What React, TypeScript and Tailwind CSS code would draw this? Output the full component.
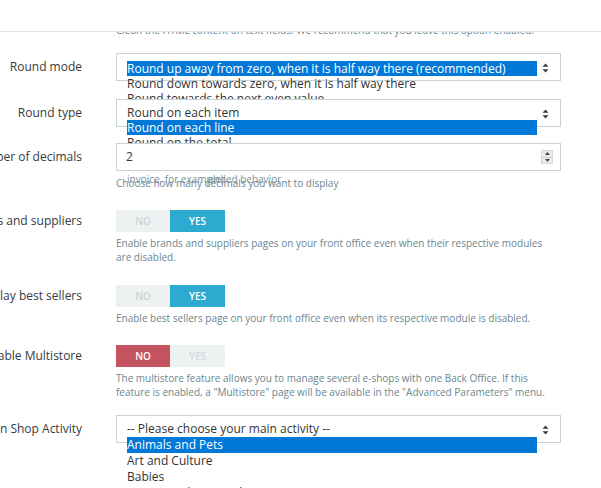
import type { ReactNode } from 'react'

const font = "font-['Open_Sans',sans-serif]"

function Label({ children, h = 'h-[28px]' }: { children: ReactNode; h?: string }) {
  return (
    <div className={`w-[82px] ${h} shrink-0 flex items-center justify-end overflow-hidden whitespace-nowrap text-[12px] text-[#363a41]`}>
      <span className="shrink-0">{children}</span>
    </div>
  )
}

function Arrows() {
  return (
    <svg width="7" height="10" viewBox="0 0 7 10" className="absolute right-[11px] top-[9px]">
      <path d="M3.5 0.5 L6.5 3.8 L0.5 3.8 Z" fill="#363a41" />
      <path d="M3.5 9.5 L6.5 6.2 L0.5 6.2 Z" fill="#363a41" />
    </svg>
  )
}

interface SelectProps {
  value?: string
  options: string[]
  active: number
  top: string
  row: string
}

function OpenSelect({ value, options, active, top, row }: SelectProps) {
  return (
    <div className="relative h-[28px] w-[445px] border border-[#c5d3d7] bg-white flex items-center pl-[10px] text-[12px] text-[#363a41]">
      {value}
      <Arrows />
      <div className={`absolute left-[10px] ${top} w-[410px] text-[12px] ${row} text-[#333]`}>
        {options.map((o, i) => (
          <div key={o} className={i === active ? 'bg-[#0078d7] text-white' : ''}>
            {o}
          </div>
        ))}
      </div>
    </div>
  )
}

function Switch({ on }: { on: boolean }) {
  return (
    <div className="flex h-[22px] w-[109px] text-[10px] font-semibold">
      <div className={`w-[54px] flex items-center justify-center ${on ? 'bg-[#eef1f2] text-[#cdd4d7]' : 'bg-[#c4545f] text-white'}`}>NO</div>
      <div className={`w-[55px] flex items-center justify-center ${on ? 'bg-[#2eaad0] text-white' : 'bg-[#eef1f2] text-[#d3d9db]'}`}>YES</div>
    </div>
  )
}

function Help({ children, className = '' }: { children: ReactNode; className?: string }) {
  return <div className={`text-[10px] leading-[14px] text-[#6c868e] ${className}`}>{children}</div>
}

export default function App() {
  return (
    <div className={`w-[601px] h-[488px] overflow-hidden bg-white relative ${font}`}>
      <div className="relative z-20 h-[32px] bg-white border-b border-[#dde3e5]" />

      <div className="flex gap-[34px] -mt-[9px]">
        <div className="w-[82px] shrink-0" />
        <Help className="whitespace-nowrap">Clean the HTML content on text fields. We recommend that you leave this option enabled.</Help>
      </div>

      {/* Round mode */}
      <div className="flex gap-[34px] mt-[16px]">
        <Label>Round mode</Label>
        <OpenSelect
          options={[
            'Round up away from zero, when it is half way there (recommended)',
            'Round down towards zero, when it is half way there',
            'Round towards the next even value',
          ]}
          active={0}
          top="top-[7px]"
          row="leading-[15px]"
        />
      </div>

      {/* Round type */}
      <div className="flex gap-[34px] mt-[18px]">
        <Label>Round type</Label>
        <OpenSelect
          options={['Round on each item', 'Round on each line', 'Round on the total']}
          active={1}
          top="top-[5px]"
          row="leading-[15px]"
        />
      </div>

      {/* Number of decimals */}
      <div className="flex gap-[34px] mt-[16px]">
        <Label>Number of decimals</Label>
        <div>
          <div className="relative z-10 h-[28px] w-[445px] border border-[#c5d3d7] bg-white flex items-center pl-[9px] text-[12px] text-[#363a41]">
            2
            <div className="absolute right-[7px] top-[6px] w-[12px] h-[14px] flex flex-col border border-[#d4d8da] bg-[#e9ebec]">
              <div className="flex-1 flex items-center justify-center border-b border-[#c9cdcf]">
                <svg width="5" height="3" viewBox="0 0 5 3"><path d="M2.5 0 L5 3 L0 3 Z" fill="#444" /></svg>
              </div>
              <div className="flex-1 flex items-center justify-center">
                <svg width="5" height="3" viewBox="0 0 5 3"><path d="M2.5 3 L5 0 L0 0 Z" fill="#444" /></svg>
              </div>
            </div>
          </div>
          <div className="relative mt-[5px]">
            <Help>Choose how many decimals you want to display</Help>
            <span className="absolute left-[11px] -top-[4px] text-[10px] leading-[14px] text-[#7d9096] whitespace-nowrap">invoice, for example)</span>
            <span className="absolute left-[92px] -top-[4px] text-[10px] leading-[14px] text-[#7d9096] whitespace-nowrap">ended behavior</span>
          </div>
        </div>
      </div>

      {/* Brands and suppliers */}
      <div className="flex gap-[34px] mt-[20px]">
        <Label h="h-[22px]">Display brands and suppliers</Label>
        <div>
          <Switch on />
          <Help className="mt-[4px] w-[440px]">
            Enable brands and suppliers pages on your front office even when their respective modules are disabled.
          </Help>
        </div>
      </div>

      {/* Best sellers */}
      <div className="flex gap-[34px] mt-[21px]">
        <Label h="h-[22px]">Display best sellers</Label>
        <div>
          <Switch on />
          <Help className="mt-[4px] whitespace-nowrap">
            Enable best sellers page on your front office even when its respective module is disabled.
          </Help>
        </div>
      </div>

      {/* Multistore */}
      <div className="flex gap-[34px] mt-[20px]">
        <Label h="h-[22px]">Enable Multistore</Label>
        <div>
          <Switch on={false} />
          <Help className="mt-[4px] w-[440px]">
            The multistore feature allows you to manage several e-shops with one Back Office. If this feature is enabled, a "Multistore" page will be available in the "Advanced Parameters" menu.
          </Help>
        </div>
      </div>

      {/* Main shop activity */}
      <div className="flex gap-[34px] mt-[16px]">
        <Label>Main Shop Activity</Label>
        <OpenSelect
          options={[
            '-- Please choose your main activity --',
            'Animals and Pets',
            'Art and Culture',
            'Babies',
            'Beauty and Personal Care',
          ]}
          active={1}
          top="top-[5px]"
          row="leading-[16px]"
        />
      </div>
    </div>
  )
}
